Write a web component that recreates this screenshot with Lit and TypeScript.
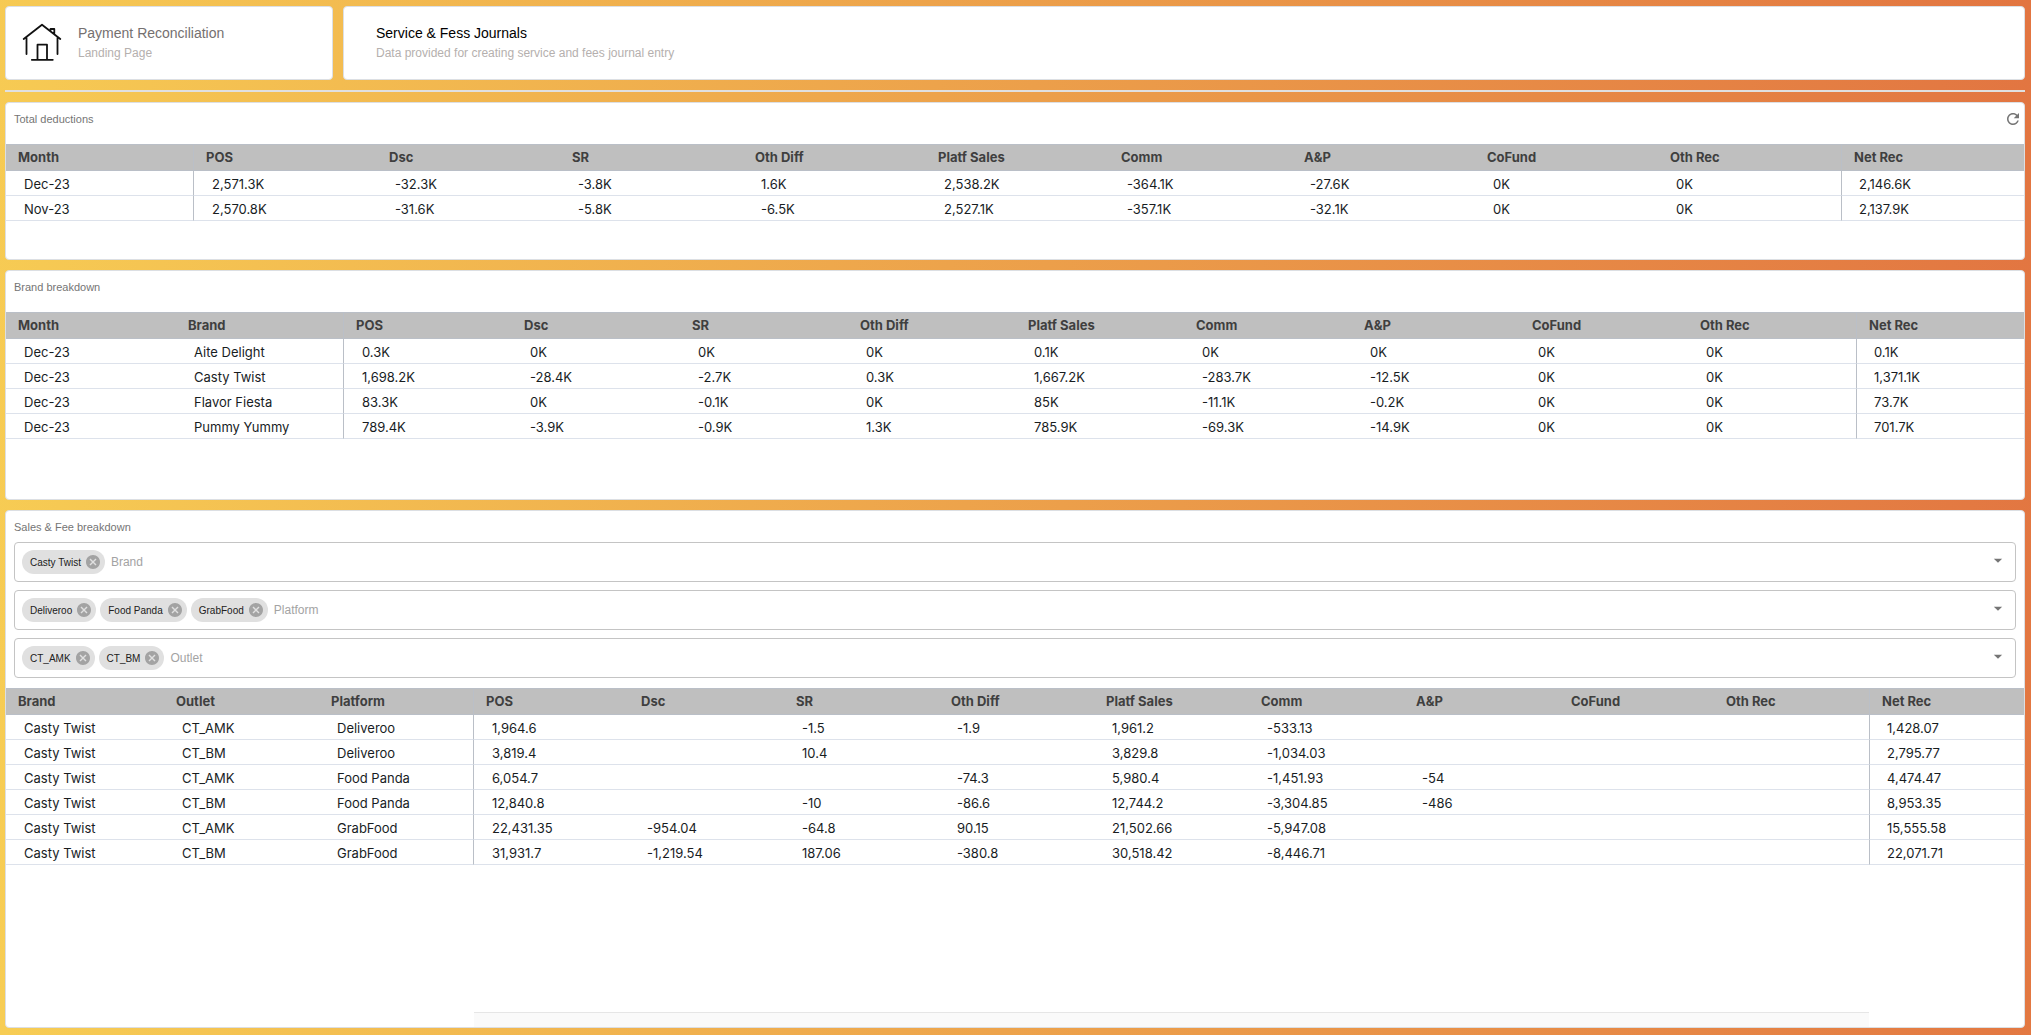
import { LitElement, html, css, svg, nothing } from "lit";
import { customElement, property } from "lit/decorators.js";
import { classMap } from "lit/directives/class-map.js";

type Row = string[];

const MEASURES = ["POS", "Dsc", "SR", "Oth Diff", "Platf Sales", "Comm", "A&P", "CoFund", "Oth Rec", "Net Rec"];

const TOTALS: Row[] = [
  ["Dec-23", "2,571.3K", "-32.3K", "-3.8K", "1.6K", "2,538.2K", "-364.1K", "-27.6K", "0K", "0K", "2,146.6K"],
  ["Nov-23", "2,570.8K", "-31.6K", "-5.8K", "-6.5K", "2,527.1K", "-357.1K", "-32.1K", "0K", "0K", "2,137.9K"],
];

const BRANDS: Row[] = [
  ["Dec-23", "Aite Delight", "0.3K", "0K", "0K", "0K", "0.1K", "0K", "0K", "0K", "0K", "0.1K"],
  ["Dec-23", "Casty Twist", "1,698.2K", "-28.4K", "-2.7K", "0.3K", "1,667.2K", "-283.7K", "-12.5K", "0K", "0K", "1,371.1K"],
  ["Dec-23", "Flavor Fiesta", "83.3K", "0K", "-0.1K", "0K", "85K", "-11.1K", "-0.2K", "0K", "0K", "73.7K"],
  ["Dec-23", "Pummy Yummy", "789.4K", "-3.9K", "-0.9K", "1.3K", "785.9K", "-69.3K", "-14.9K", "0K", "0K", "701.7K"],
];

const SALES: Row[] = [
  ["Casty Twist", "CT_AMK", "Deliveroo", "1,964.6", "", "-1.5", "-1.9", "1,961.2", "-533.13", "", "", "", "1,428.07"],
  ["Casty Twist", "CT_BM", "Deliveroo", "3,819.4", "", "10.4", "", "3,829.8", "-1,034.03", "", "", "", "2,795.77"],
  ["Casty Twist", "CT_AMK", "Food Panda", "6,054.7", "", "", "-74.3", "5,980.4", "-1,451.93", "-54", "", "", "4,474.47"],
  ["Casty Twist", "CT_BM", "Food Panda", "12,840.8", "", "-10", "-86.6", "12,744.2", "-3,304.85", "-486", "", "", "8,953.35"],
  ["Casty Twist", "CT_AMK", "GrabFood", "22,431.35", "-954.04", "-64.8", "90.15", "21,502.66", "-5,947.08", "", "", "", "15,555.58"],
  ["Casty Twist", "CT_BM", "GrabFood", "31,931.7", "-1,219.54", "187.06", "-380.8", "30,518.42", "-8,446.71", "", "", "", "22,071.71"],
];

const FILTERS = [
  { name: "Brand", chips: ["Casty Twist"] },
  { name: "Platform", chips: ["Deliveroo", "Food Panda", "GrabFood"] },
  { name: "Outlet", chips: ["CT_AMK", "CT_BM"] },
];

@customElement("data-grid")
export class DataGrid extends LitElement {
  @property({ attribute: false }) keys: string[] = [];
  @property({ attribute: false }) rows: Row[] = [];
  @property({ type: Number }) lead = 160;
  @property() label = "";
  @property({ type: Boolean }) scroller = false;

  static styles = css`
    :host {
      display: flex;
      flex-direction: column;
      flex: 1;
      font-family: Inter, "Liberation Sans", sans-serif;
      font-size: 13px;
    }
    .table {
      width: 100%;
      table-layout: fixed;
      border-collapse: separate;
      border-spacing: 0;
    }
    .head {
      box-sizing: border-box;
      height: 27px;
      padding: 0 12px 2px;
      background: #bfbfbf;
      border-top: 1px solid #babfc7;
      border-bottom: 1px solid #babfc7;
      color: #3f3f3f;
      font-weight: 700;
      line-height: 22px;
      text-align: left;
      white-space: nowrap;
    }
    .cell {
      box-sizing: border-box;
      height: 25px;
      padding: 2px 18px 0;
      border-bottom: 1px solid #dde2eb;
      color: #181d1f;
      line-height: 22px;
      white-space: nowrap;
    }
    .pin-left {
      border-right: 1px solid #babfc7;
    }
    .pin-right {
      border-left: 1px solid #babfc7;
      padding-left: 17px;
    }
    .head.pin-right {
      padding-left: 12px;
    }
    .foot {
      display: flex;
      margin-top: auto;
    }
    .track {
      flex: 9;
      box-sizing: border-box;
      height: 15px;
      background: #fafafa;
      border-top: 1px solid #e6e6e6;
    }
    .rest {
      flex: 1;
    }
    .lead {
      flex: 3 0 3px;
    }
  `;

  render() {
    const columns = [...this.keys, ...MEASURES];
    const pins = (i: number) => ({
      "pin-left": i === this.keys.length - 1,
      "pin-right": i === columns.length - 1,
    });
    return html`
      <table class="table" aria-label=${this.label}>
        <colgroup>
          <col style="width:${this.lead}px" />
          ${columns.slice(1).map(() => html`<col />`)}
        </colgroup>
        <thead>
          <tr>
            ${columns.map((c, i) => html`<th scope="col" class=${classMap({ head: true, ...pins(i) })}>${c}</th>`)}
          </tr>
        </thead>
        <tbody>
          ${this.rows.map(
            (row) => html`<tr>
              ${row.map((v, i) => html`<td class=${classMap({ cell: true, ...pins(i) })}>${v}</td>`)}
            </tr>`
          )}
        </tbody>
      </table>
      ${this.scroller
        ? html`<div class="foot"><div class="lead"></div><div class="track"></div><div class="rest"></div></div>`
        : nothing}
    `;
  }
}

@customElement("chip-filter")
export class ChipFilter extends LitElement {
  @property() name = "";
  @property({ attribute: false }) chips: string[] = [];

  static styles = css`
    :host {
      display: block;
    }
    .box {
      display: flex;
      align-items: center;
      gap: 4px;
      box-sizing: border-box;
      height: 40px;
      padding: 0 7px;
      border: 1px solid #c4c4c4;
      border-radius: 4px;
    }
    .chip {
      display: flex;
      align-items: center;
      gap: 5px;
      height: 24px;
      padding: 0 5px 0 8px;
      border-radius: 12px;
      background: #e0e0e0;
      color: #212121;
      font-size: 10px;
      white-space: nowrap;
    }
    .icon-button {
      display: flex;
      padding: 0;
      border: 0;
      background: none;
      cursor: pointer;
    }
    .remove {
      width: 14px;
      height: 14px;
      fill: #a3a3a3;
    }
    .input {
      flex: 1;
      min-width: 30px;
      padding: 0 2px;
      border: 0;
      outline: 0;
      background: none;
      color: #212121;
      font: 12px "Liberation Sans", Arial, sans-serif;
    }
    .input::placeholder {
      color: #a3a3a3;
      opacity: 1;
    }
    .arrow {
      width: 20px;
      height: 20px;
      fill: #757575;
    }
  `;

  render() {
    return html`
      <div class="box">
        ${this.chips.map(
          (chip) => html`<span class="chip">
            ${chip}
            <button class="icon-button" aria-label="Remove ${chip}">
              <svg class="remove" viewBox="2 2 20 20">
                <path
                  d="M12 2C6.47 2 2 6.47 2 12s4.47 10 10 10 10-4.47 10-10S17.53 2 12 2zm5 13.59L15.59 17 12 13.41 8.41 17 7 15.59 10.59 12 7 8.41 8.41 7 12 10.59 15.59 7 17 8.41 13.41 12 17 15.59z"
                />
              </svg>
            </button>
          </span>`
        )}
        <input class="input" type="text" placeholder=${this.name} aria-label=${this.name} />
        <button class="icon-button" aria-label="Open ${this.name}">
          <svg class="arrow" viewBox="0 0 24 24"><path d="M7 8l5 5 5-5z" /></svg>
        </button>
      </div>
    `;
  }
}

@customElement("app-root")
export class AppRoot extends LitElement {
  static styles = css`
    :host {
      display: flex;
      flex-direction: column;
      gap: 10px;
      box-sizing: border-box;
      min-height: 100vh;
      padding: 6px 6px 7px 5px;
      background: linear-gradient(86deg, #f7cd54, #e27541);
      font-family: "Liberation Sans", Arial, sans-serif;
    }
    .card {
      display: flex;
      flex-direction: column;
      box-sizing: border-box;
      background: #fff;
      border: 1px solid #dcdfe3;
      border-radius: 4px;
    }
    .top {
      display: flex;
      gap: 10px;
    }
    .banner {
      flex-direction: row;
      align-items: center;
      height: 74px;
    }
    .home {
      flex: 0 0 328px;
      gap: 16px;
      padding: 0 16px;
      color: inherit;
      text-decoration: none;
    }
    .page {
      flex: 1;
      padding: 0 32px;
    }
    .house {
      width: 40px;
      height: 40px;
      fill: none;
      stroke: #111;
      stroke-width: 1.8;
      stroke-linecap: round;
      stroke-linejoin: round;
    }
    .words {
      display: flex;
      flex-direction: column;
      gap: 4px;
    }
    .name {
      margin: 0;
      color: #757070;
      font-size: 14px;
      font-weight: 400;
      line-height: 16px;
    }
    .strong {
      color: #000;
    }
    .note {
      margin: 0;
      color: #b5b0ae;
      font-size: 12px;
      line-height: 16px;
    }
    .rule {
      width: 100%;
      height: 2px;
      margin: 0;
      border: 0;
      background: #e0e0e0;
    }
    .title-bar {
      display: flex;
      align-items: center;
      justify-content: space-between;
      height: 31px;
      padding: 0 2px 0 8px;
    }
    .title {
      margin: 0;
      color: #757575;
      font-size: 11px;
      font-weight: 400;
    }
    .spaced {
      padding-bottom: 10px;
    }
    .totals {
      min-height: 158px;
    }
    .brands {
      min-height: 230px;
    }
    .sales {
      flex: 1;
    }
    .refresh {
      display: flex;
      padding: 0;
      border: 0;
      background: none;
      cursor: pointer;
    }
    .refresh-icon {
      width: 18px;
      height: 18px;
      fill: #757575;
    }
    .filters {
      display: flex;
      flex-direction: column;
      gap: 8px;
      padding: 0 8px 10px;
    }
  `;

  private houseIcon() {
    return svg`<svg class="house" viewBox="0 0 40 40" aria-hidden="true">
      <path d="M1.700 16 20 1.800 38.300 16M4.500 15V31M35.500 15V31M28.500 7.500V6H32.300V10.500M15.500 36.500V21.700H25V36.500M9.800 36.800H30.800" />
    </svg>`;
  }

  render() {
    return html`
      <header class="top">
        <a class="card banner home" href="#">
          ${this.houseIcon()}
          <span class="words">
            <span class="name">Payment Reconciliation</span>
            <span class="note">Landing Page</span>
          </span>
        </a>
        <div class="card banner page">
          <div class="words">
            <h1 class="name strong">Service &amp; Fess Journals</h1>
            <p class="note">Data provided for creating service and fees journal entry</p>
          </div>
        </div>
      </header>
      <hr class="rule" />
      <section class="card totals">
        <div class="title-bar spaced">
          <h2 class="title">Total deductions</h2>
          <button class="refresh" aria-label="Refresh">
            <svg class="refresh-icon" viewBox="0 0 24 24">
              <path
                d="M17.650 6.350C16.200 4.900 14.210 4 12 4c-4.420 0-7.990 3.580-7.990 8s3.570 8 7.990 8c3.730 0 6.840-2.550 7.730-6h-2.080c-.82 2.330-3.040 4-5.650 4-3.310 0-6-2.690-6-6s2.690-6 6-6c1.660 0 3.140.69 4.220 1.780L13 11h7V4l-2.350 2.350z"
              />
            </svg>
          </button>
        </div>
        <data-grid label="Total deductions" lead="188" .keys=${["Month"]} .rows=${TOTALS}></data-grid>
      </section>
      <section class="card brands">
        <div class="title-bar spaced">
          <h2 class="title">Brand breakdown</h2>
        </div>
        <data-grid label="Brand breakdown" lead="170" .keys=${["Month", "Brand"]} .rows=${BRANDS}></data-grid>
      </section>
      <section class="card sales">
        <div class="title-bar">
          <h2 class="title">Sales &amp; Fee breakdown</h2>
        </div>
        <div class="filters">
          ${FILTERS.map((f) => html`<chip-filter name=${f.name} .chips=${f.chips}></chip-filter>`)}
        </div>
        <data-grid
          label="Sales &amp; Fee breakdown"
          lead="158"
          scroller
          .keys=${["Brand", "Outlet", "Platform"]}
          .rows=${SALES}
        ></data-grid>
      </section>
    `;
  }
}
